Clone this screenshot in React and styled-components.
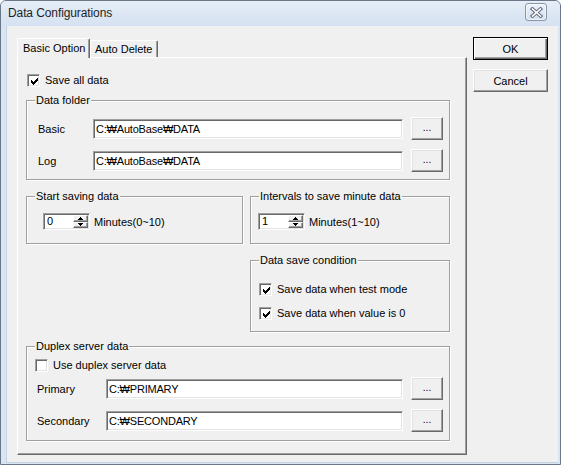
import React from 'react';
import styled, { createGlobalStyle } from 'styled-components';

const GlobalStyle = createGlobalStyle`
  html, body {
    margin: 0;
    padding: 0;
    background: #ffffff;
  }
  body {
    font-family: "Liberation Sans", "DejaVu Sans", Arial, sans-serif;
    font-size: 11px;
    color: #000;
  }
  * {
    box-sizing: border-box;
  }
`;

const CHECK = [
  '......#',
  '.....##',
  '#...###',
  '##.###.',
  '#####..',
  '.###...',
  '..#....',
];

const CheckMark = () => (
  <svg width="7" height="7" viewBox="0 0 7 7" shapeRendering="crispEdges">
    {CHECK.map((row, y) =>
      row.split('').map((c, x) =>
        c === '#' ? <rect key={`${x}-${y}`} x={x} y={y} width="1" height="1" fill="#000" /> : null
      )
    )}
  </svg>
);

const Arrow = ({ down }) => (
  <svg width="5" height="3" viewBox="0 0 5 3" shapeRendering="crispEdges">
    {down ? (
      <>
        <rect x="0" y="0" width="5" height="1" fill="#000" />
        <rect x="1" y="1" width="3" height="1" fill="#000" />
        <rect x="2" y="2" width="1" height="1" fill="#000" />
      </>
    ) : (
      <>
        <rect x="2" y="0" width="1" height="1" fill="#000" />
        <rect x="1" y="1" width="3" height="1" fill="#000" />
        <rect x="0" y="2" width="5" height="1" fill="#000" />
      </>
    )}
  </svg>
);

const CloseGlyph = () => (
  <svg width="13" height="11" viewBox="0 0 13 11">
    <path d="M2.5 2 L10.5 9 M10.5 2 L2.5 9" stroke="#5f6a7c" strokeWidth="3.6" strokeLinecap="square" />
    <path d="M2.5 2 L10.5 9 M10.5 2 L2.5 9" stroke="#ffffff" strokeWidth="1.6" strokeLinecap="square" />
  </svg>
);

const SpinBox = ({ value, label }) => (
  <SpinRow>
    <Spin>
      <SpinValue>{value}</SpinValue>
      <SpinButtons>
        <SpinButton><Arrow /></SpinButton>
        <SpinButton><Arrow down /></SpinButton>
      </SpinButtons>
    </Spin>
    <SpinLabel>{label}</SpinLabel>
  </SpinRow>
);

const PathField = ({ label, labelWidth, value, mt }) => (
  <PathRow $mt={mt}>
    <RowLabel $w={labelWidth}>{label}</RowLabel>
    <TextField>{value}</TextField>
    <BrowseButton>...</BrowseButton>
  </PathRow>
);

const Check = ({ checked, label, mt }) => (
  <CheckRow $mt={mt}>
    <CheckBox>{checked && <CheckMark />}</CheckBox>
    <CheckLabel>{label}</CheckLabel>
  </CheckRow>
);

const App = () => (
  <>
    <GlobalStyle />
    <Window>
      <TitleBar>
        <Title>Data Configurations</Title>
        <CloseButton>
          <CloseGlyph />
        </CloseButton>
      </TitleBar>

      <Client>
        <TabArea>
          <TabStrip>
            <Tab $active $w={73}>Basic Option</Tab>
            <Tab $w={68}>Auto Delete</Tab>
          </TabStrip>

          <Panel>
            <Check checked label="Save all data" />

            <Group $mt={13}>
              <GroupLabel>Data folder</GroupLabel>
              <GroupBody $pad="16px 6px 7px 8px">
                <PathField label="Basic" labelWidth={58} value="C:₩AutoBase₩DATA" />
                <PathField label="Log" labelWidth={58} value="C:₩AutoBase₩DATA" mt={9} />
              </GroupBody>
            </Group>

            <GroupRow>
              <Group $w={217}>
                <GroupLabel>Start saving data</GroupLabel>
                <GroupBody $pad="16px 6px 13px 16px">
                  <SpinBox value="0" label="Minutes(0~10)" />
                </GroupBody>
              </Group>
              <Group $w={200}>
                <GroupLabel>Intervals to save minute data</GroupLabel>
                <GroupBody $pad="16px 6px 13px 7px">
                  <SpinBox value="1" label="Minutes(1~10)" />
                </GroupBody>
              </Group>
            </GroupRow>

            <Group $mt={16} $w={200} $right>
              <GroupLabel>Data save condition</GroupLabel>
              <GroupBody $pad="22px 6px 11px 7px">
                <Check checked label="Save data when test mode" />
                <Check checked label="Save data when value is 0" mt={11} />
              </GroupBody>
            </Group>

            <Group $mt={14}>
              <GroupLabel>Duplex server data</GroupLabel>
              <GroupBody $pad="12px 6px 8px 7px">
                <Check label="Use duplex server data" />
                <PathField label="Primary" labelWidth={72} value="C:₩PRIMARY" mt={5} />
                <PathField label="Secondary" labelWidth={72} value="C:₩SECONDARY" mt={9} />
              </GroupBody>
            </Group>
          </Panel>
        </TabArea>

        <ButtonColumn>
          <DialogButton $default>OK</DialogButton>
          <DialogButton>Cancel</DialogButton>
        </ButtonColumn>
      </Client>
    </Window>
  </>
);

const Window = styled.div`
  width: 561px;
  height: 465px;
  display: flex;
  flex-direction: column;
  background: #d9e5f3;
  border: 1px solid #6a7789;
  border-radius: 6px 6px 0 0;
  overflow: hidden;
`;

const TitleBar = styled.div`
  height: 25px;
  flex-shrink: 0;
  display: flex;
  align-items: center;
  padding: 0 13px 1px 7px;
  background: linear-gradient(to bottom, #e6eef8 0%, #dbe6f3 60%, #d6e2f1 100%);
`;

const Title = styled.div`
  flex: 1;
  font-size: 12px;
  color: #1e1e1e;
  letter-spacing: -0.1px;
`;

const CloseButton = styled.div`
  width: 22px;
  height: 18px;
  margin-bottom: 2px;
  display: flex;
  align-items: center;
  justify-content: center;
  border: 1px solid #8995a7;
  border-radius: 3px;
  background: linear-gradient(to bottom, #eef3fa 0%, #dfe8f4 50%, #d3dfee 100%);
  box-shadow: inset 0 0 0 1px rgba(255, 255, 255, 0.6);
`;

const Client = styled.div`
  flex: 1;
  display: flex;
  align-items: flex-start;
  margin: 0 2px 1px 5px;
  padding: 11px 0 0 10px;
  background: #f0f0f0;
  border-left: 1px solid #c5d2e2;
  border-bottom: 1px solid #c5d2e2;
`;

const TabArea = styled.div`
  width: 450px;
  height: 417px;
  margin-top: 1px;
  display: flex;
  flex-direction: column;
`;

const TabStrip = styled.div`
  height: 20px;
  margin-bottom: -1px;
  display: flex;
  align-items: flex-end;
`;

const Tab = styled.div`
  position: relative;
  z-index: ${p => (p.$active ? 1 : 0)};
  width: ${p => p.$w}px;
  height: ${p => (p.$active ? 20 : 17)}px;
  margin-bottom: ${p => (p.$active ? 0 : 1)}px;
  padding: ${p => (p.$active ? '3px 0 0 5px' : '2px 0 0 4px')};
  line-height: 13px;
  white-space: nowrap;
  background: #f0f0f0;
  border-top: 1px solid #ffffff;
  border-left: 1px solid #ffffff;
  border-right: 1px solid #696969;
  border-radius: 2px 2px 0 0;
  box-shadow: inset -1px 0 0 #a0a0a0;
`;

const Panel = styled.div`
  flex: 1;
  display: flex;
  flex-direction: column;
  padding: 16px 16px 0 8px;
  background: #f0f0f0;
  border-top: 1px solid #ffffff;
  border-left: 1px solid #ffffff;
  border-right: 1px solid #696969;
  border-bottom: 1px solid #696969;
  box-shadow: inset -1px -1px 0 #a0a0a0;
`;

const CheckRow = styled.div`
  display: flex;
  align-items: center;
  height: 13px;
  margin-top: ${p => p.$mt || 0}px;
  margin-left: 1px;
`;

const CheckBox = styled.div`
  width: 13px;
  height: 13px;
  flex-shrink: 0;
  display: flex;
  align-items: center;
  justify-content: center;
  background: #ffffff;
  border: 1px solid;
  border-color: #a0a0a0 #ffffff #ffffff #a0a0a0;
  box-shadow: inset 1px 1px 0 #696969, inset -1px -1px 0 #e3e3e3;
  padding: 1px 0 0 1px;
`;

const CheckLabel = styled.span`
  margin-left: 5px;
  line-height: 13px;
  white-space: nowrap;
`;

const Group = styled.div`
  display: flex;
  flex-direction: column;
  width: ${p => (p.$w ? `${p.$w}px` : 'auto')};
  align-self: ${p => (p.$right ? 'flex-end' : 'stretch')};
  margin-top: ${p => p.$mt || 0}px;
  border: 1px solid #a0a0a0;
  box-shadow: 1px 1px 0 #ffffff, inset 1px 1px 0 #ffffff;
`;

const GroupLabel = styled.span`
  align-self: flex-start;
  margin: -7px 0 -6px 8px;
  padding: 0 1px;
  line-height: 13px;
  white-space: nowrap;
  background: #f0f0f0;
`;

const GroupBody = styled.div`
  display: flex;
  flex-direction: column;
  padding: ${p => p.$pad};
`;

const GroupRow = styled.div`
  display: flex;
  justify-content: space-between;
  margin-top: 16px;
`;

const PathRow = styled.div`
  display: flex;
  align-items: center;
  height: 23px;
  margin-top: ${p => p.$mt || 0}px;
`;

const RowLabel = styled.span`
  width: ${p => p.$w}px;
  flex-shrink: 0;
  padding-left: 3px;
  white-space: nowrap;
`;

const TextField = styled.div`
  flex: 1;
  height: 20px;
  display: flex;
  align-items: center;
  padding: 0 0 0 2px;
  background: #ffffff;
  border: 1px solid;
  border-color: #a0a0a0 #ffffff #ffffff #a0a0a0;
  box-shadow: inset 1px 1px 0 #696969, inset -1px -1px 0 #e3e3e3;
  white-space: nowrap;
  letter-spacing: -0.2px;
`;

const BrowseButton = styled.div`
  width: 32px;
  height: 23px;
  margin-left: 8px;
  flex-shrink: 0;
  display: flex;
  align-items: center;
  justify-content: center;
  padding-bottom: 2px;
  background: #f0f0f0;
  border: 1px solid;
  border-color: #ffffff #696969 #696969 #ffffff;
  box-shadow: inset -1px -1px 0 #a0a0a0, inset 1px 1px 0 #e3e3e3;
  font-size: 10px;
`;

const SpinRow = styled.div`
  display: flex;
  align-items: center;
  height: 17px;
`;

const Spin = styled.div`
  width: 47px;
  height: 17px;
  display: flex;
  background: #ffffff;
  border: 1px solid;
  border-color: #a0a0a0 #ffffff #ffffff #a0a0a0;
  box-shadow: inset 1px 1px 0 #696969, inset -1px -1px 0 #e3e3e3;
  padding: 1px;
`;

const SpinValue = styled.div`
  flex: 1;
  padding-left: 2px;
  line-height: 13px;
`;

const SpinButtons = styled.div`
  width: 15px;
  display: flex;
  flex-direction: column;
`;

const SpinButton = styled.div`
  flex: 1;
  display: flex;
  align-items: center;
  justify-content: center;
  background: #f0f0f0;
  border: 1px solid;
  border-color: #ffffff #696969 #696969 #ffffff;
  box-shadow: inset -1px -1px 0 #a0a0a0;
`;

const SpinLabel = styled.span`
  margin-left: 4px;
  white-space: nowrap;
`;

const ButtonColumn = styled.div`
  display: flex;
  flex-direction: column;
  gap: 9px;
  margin-left: 6px;
`;

const DialogButton = styled.div`
  width: 75px;
  height: 23px;
  display: flex;
  align-items: center;
  justify-content: center;
  background: #f0f0f0;
  border: 1px solid;
  border-color: ${p => (p.$default ? '#000000' : '#ffffff #696969 #696969 #ffffff')};
  box-shadow: ${p =>
    p.$default
      ? 'inset 1px 1px 0 #ffffff, inset -1px -1px 0 #696969, inset -2px -2px 0 #a0a0a0'
      : 'inset -1px -1px 0 #a0a0a0, inset 1px 1px 0 #e3e3e3'};
`;

export default App;
